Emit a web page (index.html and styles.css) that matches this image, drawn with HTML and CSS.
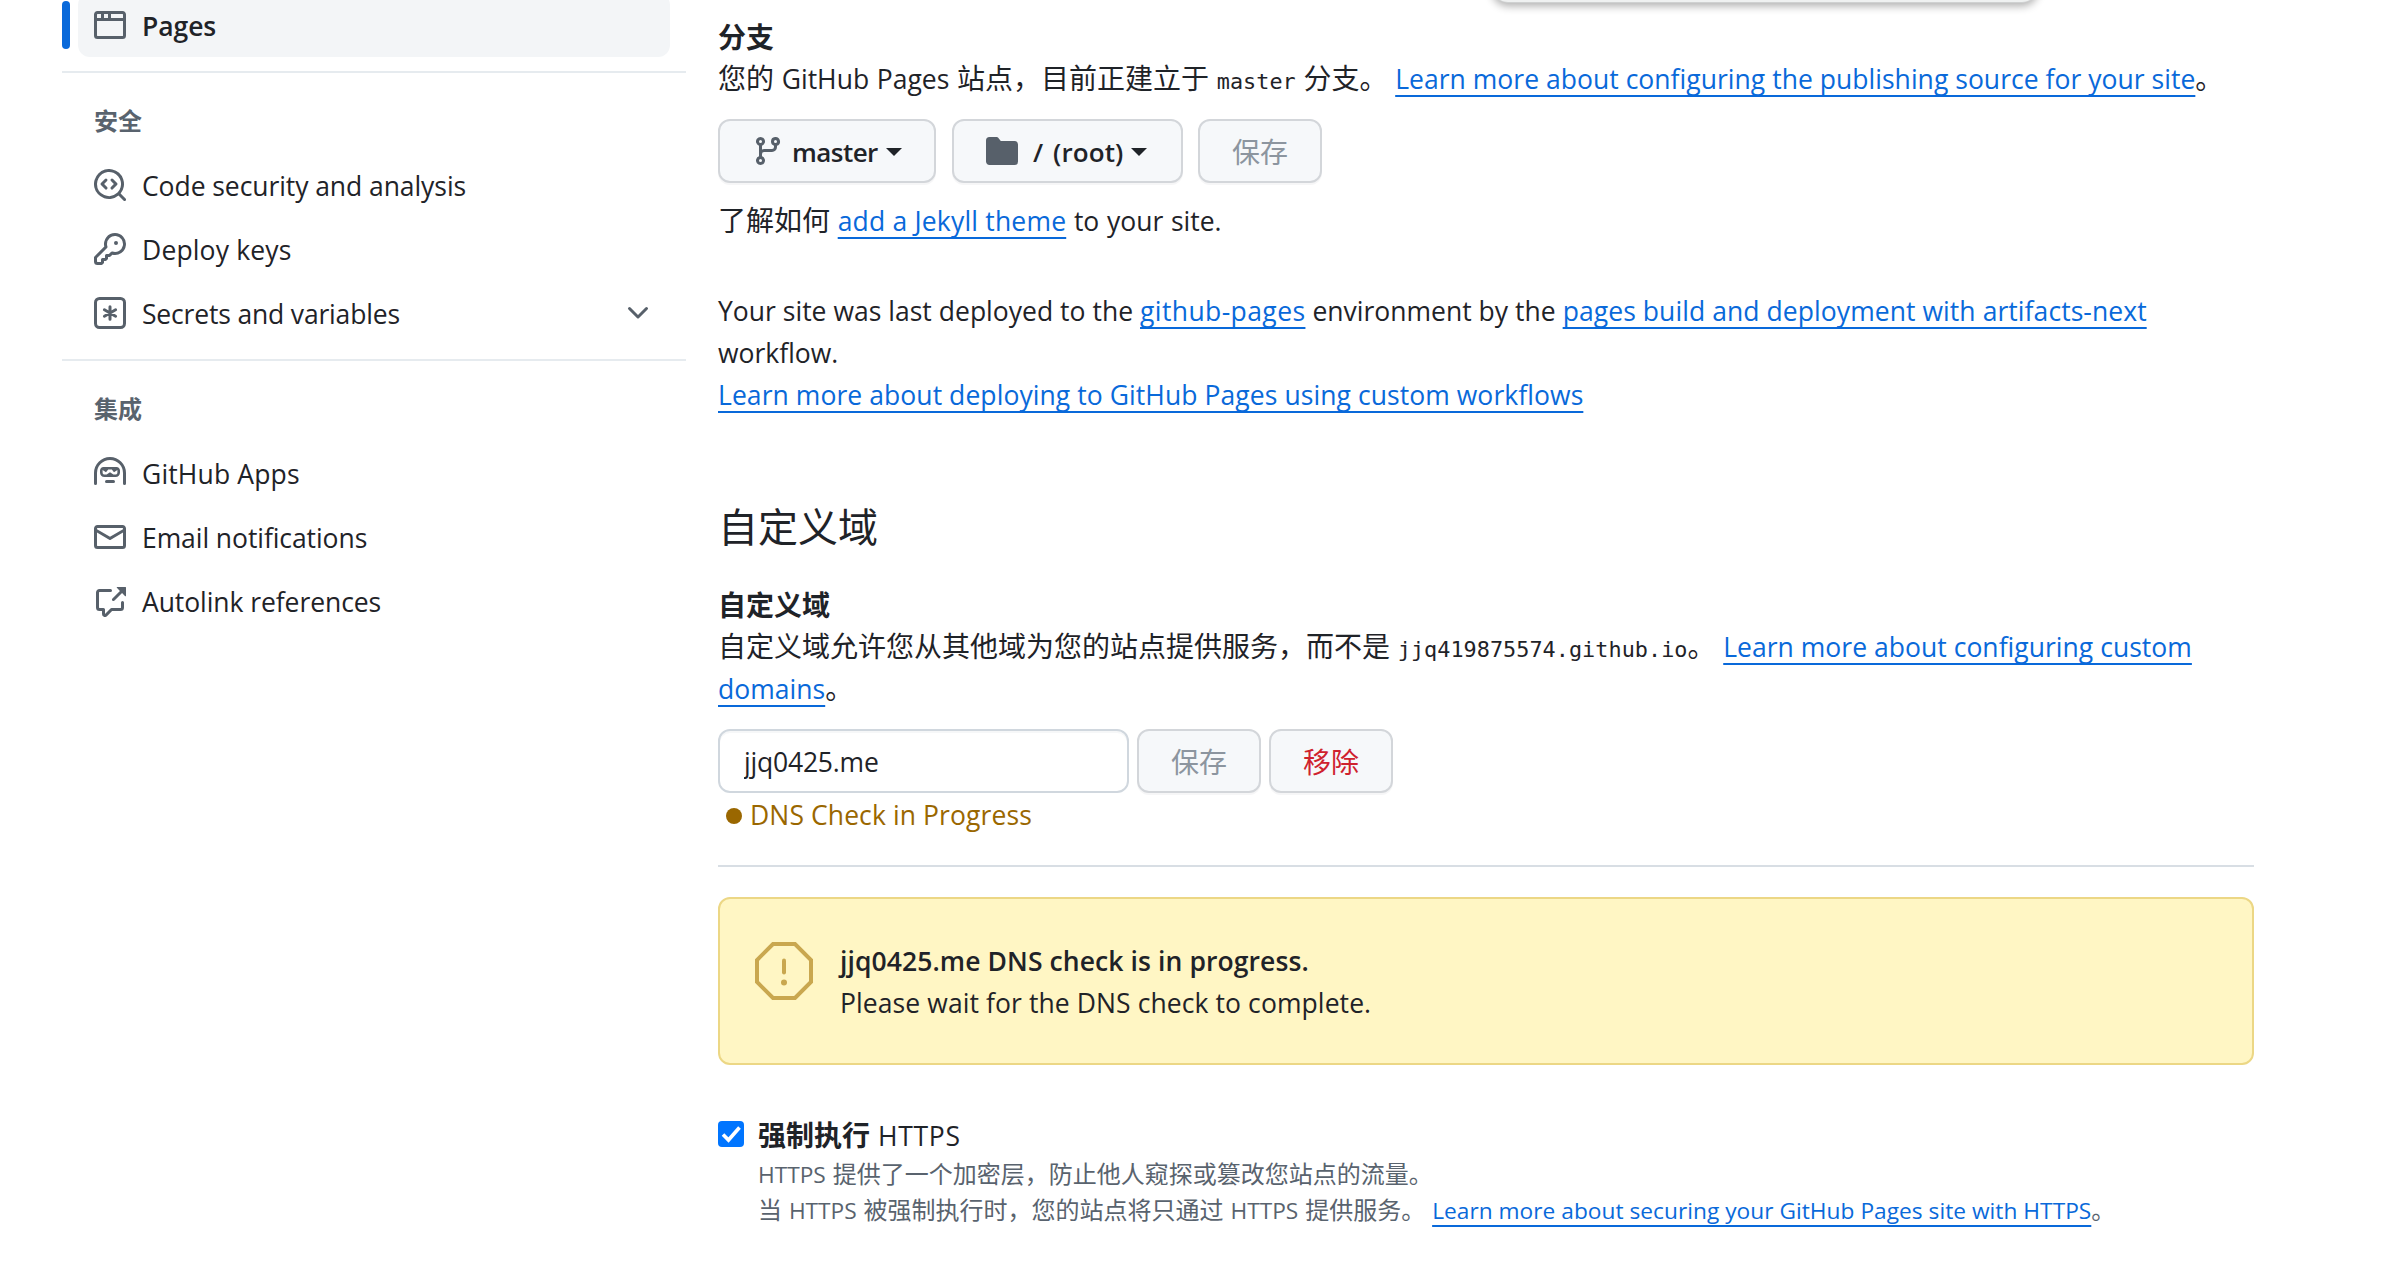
FILE: index.html
```
<!DOCTYPE html>
<html lang="zh-CN">
<head>
<meta charset="utf-8">
<title>GitHub Pages</title>
<link rel="stylesheet" href="styles.css">
</head>
<body>
<div class="popover-edge"></div>
<div class="layout">
  <nav class="sidebar">
    <a class="nav-item nav-item-current">
      <svg class="icon" viewBox="0 0 16 16"><path d="M0 2.75C0 1.784.784 1 1.75 1h12.5c.966 0 1.75.784 1.75 1.75v10.5A1.75 1.75 0 0 1 14.25 15H1.75A1.75 1.75 0 0 1 0 13.25ZM14.5 6h-13v7.25c0 .138.112.25.25.25h12.5a.25.25 0 0 0 .25-.25Zm-6-3.5v2h6V2.75a.25.25 0 0 0-.25-.25ZM5 2.5v2h2v-2Zm-3.25 0a.25.25 0 0 0-.25.25V4.5h2v-2Z"/></svg>
      <span>Pages</span>
    </a>
    <section class="nav-group">
      <h3 class="nav-heading">安全</h3>
      <a class="nav-item">
        <svg class="icon" viewBox="0 0 16 16"><path d="M8.47 4.97a.75.75 0 0 0 0 1.06L9.94 7.5 8.47 8.97a.75.75 0 1 0 1.06 1.06l2-2a.75.75 0 0 0 0-1.06l-2-2a.75.75 0 0 0-1.06 0ZM6.53 6.03a.75.75 0 0 0-1.06-1.06l-2 2a.75.75 0 0 0 0 1.06l2 2a.75.75 0 1 0 1.06-1.06L5.06 7.5Z"/><path d="M12.246 13.307a7.501 7.501 0 1 1 1.06-1.06l2.474 2.473a.749.749 0 0 1-.326 1.275.749.749 0 0 1-.734-.215ZM1.5 7.5a6.002 6.002 0 0 0 3.608 5.504 6.002 6.002 0 0 0 6.486-1.117.748.748 0 0 1 .292-.293A6 6 0 1 0 1.5 7.5Z"/></svg>
        <span>Code security and analysis</span>
      </a>
      <a class="nav-item nav-item-wide">
        <svg class="icon" viewBox="0 0 16 16"><path d="M10.5 0a5.499 5.499 0 1 1-1.288 10.848l-.932.932a.749.749 0 0 1-.53.22H7v.75a.749.749 0 0 1-.22.53l-.5.5a.749.749 0 0 1-.53.22H5v.75a.749.749 0 0 1-.22.53l-.5.5a.749.749 0 0 1-.53.22h-2A1.75 1.75 0 0 1 0 14.25v-2c0-.199.079-.389.22-.53l4.932-4.932A5.5 5.5 0 0 1 10.5 0Zm-4 5.5c-.001.431.069.86.205 1.269a.75.75 0 0 1-.181.768L1.5 12.56v1.69c0 .138.112.25.25.25h1.69l.06-.06v-1.19a.75.75 0 0 1 .75-.75h1.19l.06-.06v-1.19a.75.75 0 0 1 .75-.75h1.19l1.023-1.025a.75.75 0 0 1 .768-.18A4 4 0 1 0 6.5 5.5ZM11 6a1 1 0 1 1 0-2 1 1 0 0 1 0 2Z"/></svg>
        <span>Deploy keys</span>
      </a>
      <a class="nav-item nav-item-tight">
        <svg class="icon icon-stroke" viewBox="0 0 16 16"><rect x=".75" y=".75" width="14.5" height="14.5" rx="2"/><path d="M8 4.9v6.2M5.2 6.4l5.6 3.2M10.8 6.4 5.2 9.6"/></svg>
        <span>Secrets and variables</span>
        <svg class="icon nav-chevron" viewBox="0 0 16 16"><path d="M12.78 5.22a.749.749 0 0 1 0 1.06l-4.25 4.25a.749.749 0 0 1-1.06 0L3.22 6.28a.749.749 0 1 1 1.06-1.06L8 8.939l3.72-3.719a.749.749 0 0 1 1.06 0Z"/></svg>
      </a>
    </section>
    <section class="nav-group">
      <h3 class="nav-heading">集成</h3>
      <a class="nav-item nav-item-wide">
        <svg class="icon" viewBox="0 0 16 16"><path d="M0 8a8 8 0 1 1 16 0v5.25a.75.75 0 0 1-1.5 0V8a6.5 6.5 0 1 0-13 0v5.25a.75.75 0 0 1-1.5 0Zm5.5 4.25a.75.75 0 0 1 .75-.75h3.5a.75.75 0 0 1 0 1.5h-3.5a.75.75 0 0 1-.75-.75Z"/><path fill-rule="evenodd" d="M3 6.75C3 5.784 3.784 5 4.75 5h6.5c.966 0 1.75.784 1.75 1.75v1C13 9.1 12.1 10 10.75 10h-5.5C3.9 10 3 9.1 3 7.75Zm1.3-.25v1.2c0 .7.4 1.1 1.1 1.1h.9L8 7.6l1.7 1.2h.9c.7 0 1.1-.4 1.1-1.1V6.5L10 7.6 8.9 6.3H7.1L6 7.6Z"/></svg>
        <span>GitHub Apps</span>
      </a>
      <a class="nav-item">
        <svg class="icon" viewBox="0 0 16 16"><path d="M1.75 2h12.5c.966 0 1.75.784 1.75 1.75v8.5A1.75 1.75 0 0 1 14.25 14H1.75A1.75 1.75 0 0 1 0 12.25v-8.5C0 2.784.784 2 1.75 2ZM1.5 12.251c0 .138.112.25.25.25h12.5a.25.25 0 0 0 .25-.25V5.809L8.38 9.397a.75.75 0 0 1-.76 0L1.5 5.809v6.442Zm13-8.181v-.32a.25.25 0 0 0-.25-.25H1.75a.25.25 0 0 0-.25.25v.32L8 7.88Z"/></svg>
        <span>Email notifications</span>
      </a>
      <a class="nav-item">
        <svg class="icon" viewBox="0 0 16 16"><path d="M2.75 3.5a.25.25 0 0 0-.25.25v7.5c0 .138.112.25.25.25h2a.75.75 0 0 1 .75.75v2.19l2.72-2.72a.749.749 0 0 1 .53-.22h4.5a.25.25 0 0 0 .25-.25v-2.5a.75.75 0 0 1 1.5 0v2.5A1.75 1.75 0 0 1 13.25 13H9.06l-2.573 2.573A1.458 1.458 0 0 1 4 14.543V13H2.75A1.75 1.75 0 0 1 1 11.25v-7.5C1 2.784 1.784 2 2.75 2h5.5a.75.75 0 0 1 0 1.5ZM16 1.25v4.146a.25.25 0 0 1-.427.177L14.03 4.03l-3.75 3.75a.749.749 0 0 1-1.275-.326.749.749 0 0 1 .215-.734l3.75-3.75-1.543-1.543A.25.25 0 0 1 11.604 1h4.146a.25.25 0 0 1 .25.25Z"/></svg>
        <span>Autolink references</span>
      </a>
    </section>
  </nav>

  <main class="content">
    <h4 class="label zh">分支</h4>
    <p class="text text-lead"><span class="zh">您的</span> GitHub Pages <span class="zh">站点，目前正建立于</span> <code>master</code> <span class="zh">分支。</span> <a class="link">Learn more about configuring the publishing source for your site</a><span class="zh">。</span></p>
    <div class="branch-row">
      <button class="btn btn-branch">
        <svg class="icon" viewBox="0 0 16 16"><path d="M9.5 3.25a2.25 2.25 0 1 1 3 2.122V6A2.5 2.5 0 0 1 10 8.5H6a1 1 0 0 0-1 1v1.128a2.251 2.251 0 1 1-1.5 0V5.372a2.25 2.25 0 1 1 1.5 0v1.836A2.493 2.493 0 0 1 6 7h4a1 1 0 0 0 1-1v-.628A2.25 2.25 0 0 1 9.5 3.25Zm-6 0a.75.75 0 1 0 1.5 0 .75.75 0 0 0-1.5 0Zm8.25-.75a.75.75 0 1 0 0 1.5.75.75 0 0 0 0-1.5ZM4.25 12a.75.75 0 1 0 0 1.5.75.75 0 0 0 0-1.5Z"/></svg>
        <span>master</span><i class="caret"></i>
      </button>
      <button class="btn btn-folder">
        <svg class="icon" viewBox="0 0 16 16"><path d="M1.75 1A1.75 1.75 0 0 0 0 2.75v10.5C0 14.216.784 15 1.75 15h12.5A1.75 1.75 0 0 0 16 13.25v-8.5A1.75 1.75 0 0 0 14.25 3H7.5a.25.25 0 0 1-.2-.1l-.9-1.2C6.07 1.26 5.55 1 5 1H1.75Z"/></svg>
        <span>/ (root)</span><i class="caret"></i>
      </button>
      <button class="btn btn-plain btn-disabled zh">保存</button>
    </div>
    <p class="text"><span class="zh">了解如何</span> <a class="link link-wide">add a Jekyll theme</a> to your site.</p>
    <p class="text deployed">Your site was last deployed to the <a class="link link-widest">github-pages</a> environment by the <a class="link link-flow">pages build and deployment with artifacts-next</a> workflow.<br><a class="link link-flow">Learn more about deploying to GitHub Pages using custom workflows</a></p>

    <h2 class="section-title">自定义域</h2>
    <h4 class="label zh">自定义域</h4>
    <p class="text text-lead"><span class="zh">自定义域允许您从其他域为您的站点提供服务，而不是</span> <code>jjq419875574.github.io</code><span class="zh">。</span> <a class="link">Learn more about configuring custom domains</a><span class="zh">。</span></p>
    <div class="domain-row">
      <input class="domain-input" type="text" value="jjq0425.me">
      <button class="btn btn-plain btn-disabled zh">保存</button>
      <button class="btn btn-plain btn-danger zh">移除</button>
    </div>
    <div class="dns-status"><i class="dot"></i><span>DNS Check in Progress</span></div>
    <hr class="divider">

    <div class="flash">
      <svg class="flash-icon" viewBox="0 0 58 58"><path d="M18 2h22l16 16v22L40 56H18L2 40V18Z"/><path class="bang" d="M29 18.5v12"/><circle cx="29" cy="40.5" r="3"/></svg>
      <div><strong>jjq0425.me DNS check is in progress.</strong><br>Please wait for the DNS check to complete.</div>
    </div>

    <div class="https">
      <span class="checkbox"><svg viewBox="0 0 26 26"><path d="m5 13.5 5.500 5.500L21.500 6.500"/></svg></span>
      <div>
        <div class="https-label"><span class="zh">强制执行</span> <span class="latin">HTTPS</span></div>
        <p class="note">HTTPS <span class="zh">提供了一个加密层，防止他人窥探或篡改您站点的流量。</span><br><span class="zh">当</span> HTTPS <span class="zh">被强制执行时，您的站点将只通过</span> HTTPS <span class="zh">提供服务。</span> <a class="link">Learn more about securing your GitHub Pages site with HTTPS</a><span class="zh">。</span></p>
      </div>
    </div>
  </main>
</div>
</body>
</html>
```
FILE: styles.css
```
* { box-sizing: border-box; }

body {
  margin: 0;
  height: 1272px;
  overflow: hidden;
  background: #fff;
  color: #1f2328;
  font: 26.5px/42px "Open Sans", "Noto Sans CJK SC", sans-serif;
}

h2, h3, h4, p { margin: 0; }

.zh { font-family: "Noto Sans CJK SC", sans-serif; font-size: 28px; line-height: 1; }

/* lower edge of the browser popup that hangs over the page */
.popover-edge {
  position: absolute;
  top: -40px;
  left: 1492px;
  width: 546px;
  height: 43px;
  border-radius: 16px;
  border-bottom: 1px solid #cfd1d1;
  background: #eff1f1;
  box-shadow: 0 3px 8px rgba(0, 0, 0, .32);
}

.layout { display: flex; gap: 32px; padding-left: 62px; }

/* sidebar */
.sidebar { width: 624px; flex: none; margin-top: -7px; }

.nav-item {
  display: flex;
  align-items: center;
  gap: 16px;
  height: 64px;
  margin: 0 16px;
  padding: 0 16px;
  border-radius: 12px;
  letter-spacing: -.07px;
}
.nav-item span { padding-top: 2px; }
.nav-item-tight { letter-spacing: -.17px; }
.nav-item-wide { letter-spacing: .15px; }

.nav-item-current { position: relative; background: #f3f5f7; font-weight: 600; }
.nav-item-current::before {
  content: "";
  position: absolute;
  left: -16px;
  top: 8px;
  width: 8px;
  height: 48px;
  border-radius: 12px;
  background: #0969da;
}

.nav-group { margin-top: 14px; border-top: 2px solid #e6ebef; }
.nav-heading {
  height: 80px;
  padding: 11px 32px 0;
  color: #59636e;
  font: 700 24px/72px "Noto Sans CJK SC", sans-serif;
}

.icon { width: 32px; height: 32px; flex: none; fill: #57606a; }
.icon-stroke { fill: none; stroke: #57606a; stroke-width: 1.5; stroke-linecap: round; }
.nav-chevron { margin-left: auto; }

/* main column */
.content { width: 1536px; flex: none; padding-top: 15px; }

.label { height: 42px; font-weight: 700; line-height: 42px; }
.text { word-spacing: .8px; }
.text-lead { padding-top: 1px; }

.link {
  color: #0969da;
  letter-spacing: .03px;
  word-spacing: 0;
  text-decoration: underline;
  text-decoration-thickness: 2px;
  text-underline-offset: 6px;
}
.link-wide { letter-spacing: .19px; }
.link-widest { letter-spacing: .4px; }
.link-flow { letter-spacing: .07px; }

code { font: 21.8px/1 "DejaVu Sans Mono", monospace; letter-spacing: .05px; }

.branch-row, .domain-row { display: flex; }
.branch-row { gap: 16px; margin: 19px 0 17px; }
.domain-row { gap: 8px; margin: 19px 0 1px; }

.btn {
  display: flex;
  align-items: center;
  height: 64px;
  border: 2px solid #d3d6da;
  border-radius: 12px;
  background: #f6f8fa;
  box-shadow: 0 2px 0 rgba(31, 35, 40, .04);
  color: #1f2328;
  font: 600 26px/40px "Open Sans", sans-serif;
  letter-spacing: -.4px;
}
.btn span, .caret { margin-top: 2px; }
.btn-branch { width: 218px; padding: 0 0 0 32px; }
.btn-branch span { margin-left: 8px; letter-spacing: -.55px; }
.btn-folder { width: 231px; padding: 0 0 0 32px; }
.btn-folder span { margin-left: 15px; letter-spacing: .1px; word-spacing: 3px; }
.btn-folder + .btn { margin-left: -1px; }
.btn-plain {
  justify-content: center;
  width: 124px;
  padding: 0;
  font: 400 28px/40px "Noto Sans CJK SC", sans-serif;
  letter-spacing: 0;
}
.btn-disabled { color: #8c959f; }
.btn-danger { color: #cf222e; }

.caret {
  margin-left: 8px;
  border: 8px solid transparent;
  border-top-color: #1f2328;
  border-bottom: 0;
}

.deployed { margin-top: 48px; word-spacing: .1px; }

.section-title { margin: 79px 0 28px; font: 400 40px/60px "Noto Sans CJK SC", sans-serif; }

.domain-input {
  width: 411px;
  height: 64px;
  padding: 2px 24px 0;
  border: 2px solid #d0d7de;
  border-radius: 12px;
  background: #fff;
  box-shadow: inset 0 2px 0 rgba(208, 215, 222, .2);
  color: #1f2328;
  font: 26.5px "Open Sans", sans-serif;
  letter-spacing: -.2px;
}

.dns-status {
  display: flex;
  align-items: center;
  gap: 8px;
  padding-left: 8px;
  color: #9a6700;
  letter-spacing: .1px;
}
.dot { width: 16px; height: 16px; margin-top: 2px; border-radius: 50%; background: #9a6700; }

.divider { height: 2px; margin: 29px 0 30px; border: 0; background: #d8dee4; }

.flash {
  display: flex;
  gap: 27px;
  height: 168px;
  padding: 41px 35px;
  border: 2px solid #ecd785;
  border-radius: 12px;
  background: #fff6c4;
  letter-spacing: .09px;
}
.flash strong { font-weight: 600; }
.flash-icon { width: 58px; height: 58px; margin-top: 2px; flex: none; fill: none; stroke: #c9a74f; stroke-width: 4; }
.flash-icon .bang { stroke-linecap: round; }
.flash-icon circle { fill: #c9a74f; stroke: none; }

.https { display: flex; gap: 14px; margin-top: 50px; }
.checkbox { width: 26px; height: 26px; margin-top: 6px; flex: none; border-radius: 4px; background: #0075ff; }
.checkbox svg { display: block; fill: none; stroke: #fff; stroke-width: 3.6; }
.https-label { font-weight: 700; word-spacing: 1px; }
.https-label .latin { font-weight: 500; letter-spacing: .7px; }

.note { color: #59636e; font-size: 22.7px; line-height: 36px; word-spacing: 1px; }
.note .zh { font-size: 24px; }
```
